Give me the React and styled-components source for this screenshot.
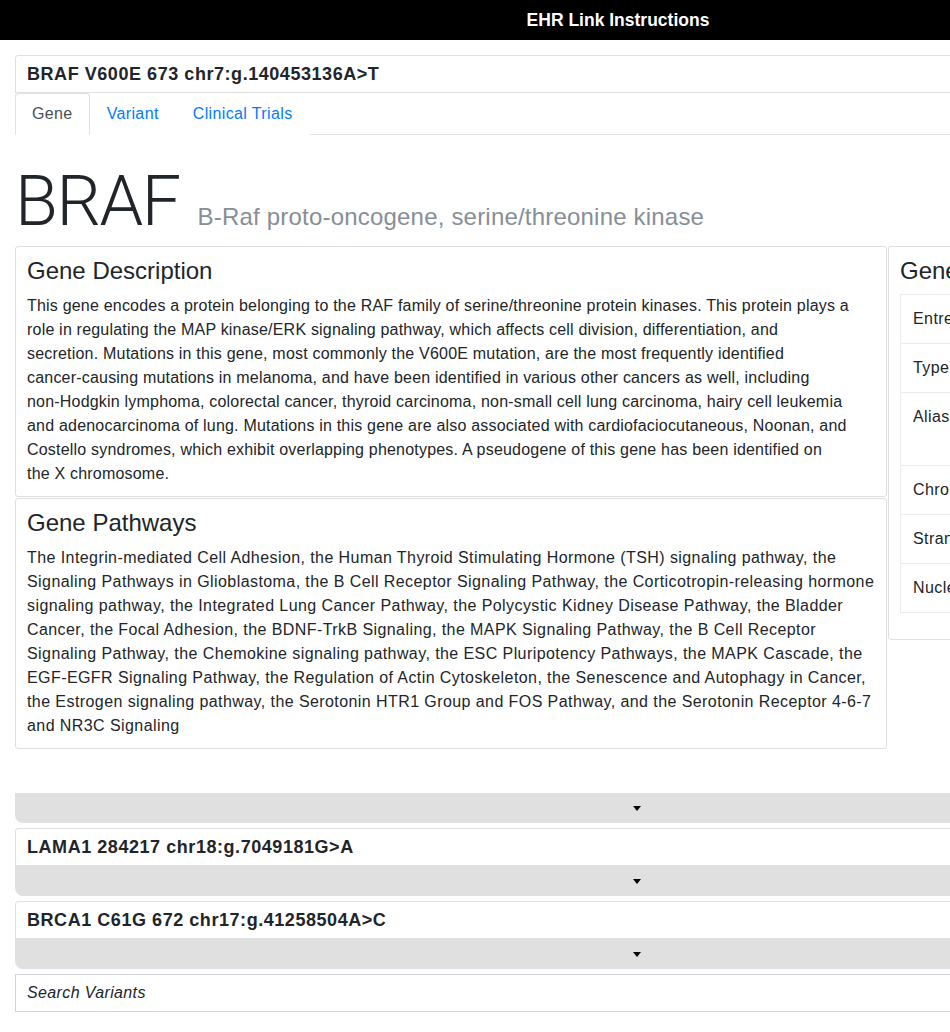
import styled, { createGlobalStyle } from "styled-components";

const Global = createGlobalStyle`
    body{
        margin:0;
        font-family: "Liberation Sans", Arial, sans-serif;
        font-size:16px;
        line-height:1.5;
        letter-spacing:0.42px;
        color:#212529;
        background:#fff;
    }
    *{ box-sizing:border-box; }
`;

const Page = styled.div`
    width:1274px;
`;

const TopBar = styled.div`
    height:40px;
    background:#000;
    color:#fff;
    display:flex;
    align-items:center;
    justify-content:center;
    padding-right:38px;
    font-size:17.5px;
    font-weight:bold;
    letter-spacing:0;
`;

const Main = styled.div`
    padding:15px 15px 0 15px;
`;

const Block = styled.div`
    margin-bottom:5px;
`;

const Card = styled.div`
    border:1px solid rgba(0,0,0,.125);
    border-radius:3px 3px 0 0;
`;

const CardHeader = styled.div`
    padding:6px 11px;
    font-size:18px;
    font-weight:bold;
    line-height:24px;
    letter-spacing:0.55px;
`;

const Tabs = styled.div`
    display:flex;
    border-bottom:1px solid #dee2e6;
`;

const Tab = styled.div`
    padding:8px 16px;
    line-height:24px;
    margin-bottom:-1px;
    letter-spacing:0.37px;
    border:1px solid ${p => p.active ? "#dee2e6" : "transparent"};
    border-bottom-color:${p => p.active ? "#fff" : "transparent"};
    border-radius:4px 4px 0 0;
    background:#fff;
    color:${p => p.active ? "#495057" : "#007bff"};
`;

const Content = styled.div`
    padding-bottom:44px;
`;

const Title = styled.h1`
    margin:23px 0 2px 0;
    font-family: Roboto, "Liberation Sans", sans-serif;
    font-size:70px;
    font-weight:300;
    line-height:86px;
    letter-spacing:-1.5px;
`;

const Subtitle = styled.small`
    font-family: "Liberation Sans", Arial, sans-serif;
    font-size:24px;
    font-weight:400;
    line-height:1;
    color:#868e96;
    letter-spacing:0.2px;
    margin-left:18px;
`;

const Row = styled.div`
    display:flex;
    align-items:flex-start;
    gap:1px;
`;

const LeftCol = styled.div`
    width:872px;
    flex:none;
`;

const RightCol = styled.div`
    flex:1;
`;

const Panel = styled.div`
    border:1px solid rgba(0,0,0,.125);
    border-radius:3px;
    padding:10px 11px;
    & + &{ margin-top:1px; }
`;

const PanelTitle = styled.h4`
    margin:0 0 8px 0;
    font-size:24px;
    font-weight:500;
    line-height:1.2;
    letter-spacing:0;
`;

const Text = styled.p`
    margin:0;
    letter-spacing:${p => p.tight ? "0.2px" : "inherit"};
`;

const Table = styled.table`
    width:100%;
    border-collapse:collapse;
    margin-bottom:16px;
    td{
        border:1px solid #e9ecef;
        padding:12px;
        line-height:24px;
        vertical-align:top;
    }
    td:first-child{ width:150px; }
`;

const Toggle = styled.div`
    height:30px;
    background:#e0e0e0;
    border-radius:0 0 8px 8px;
    display:flex;
    align-items:center;
    justify-content:center;
`;

const Caret = styled.span`
    width:0;
    height:0;
    border-left:4px solid transparent;
    border-right:4px solid transparent;
    border-top:5px solid #000;
    margin-top:2px;
`;

const Search = styled.input`
    display:block;
    width:100%;
    margin-top:5px;
    height:38px;
    padding:6px 11px;
    font:inherit;
    line-height:24px;
    letter-spacing:0.37px;
    border:1px solid #ced4da;
    outline:none;
    &::placeholder{
        color:#212529;
        font-style:italic;
    }
`;

// line breaks follow the original layout
const descriptionLines = [
    "This gene encodes a protein belonging to the RAF family of serine/threonine protein kinases. This protein plays a",
    "role in regulating the MAP kinase/ERK signaling pathway, which affects cell division, differentiation, and",
    "secretion. Mutations in this gene, most commonly the V600E mutation, are the most frequently identified",
    "cancer-causing mutations in melanoma, and have been identified in various other cancers as well, including",
    "non-Hodgkin lymphoma, colorectal cancer, thyroid carcinoma, non-small cell lung carcinoma, hairy cell leukemia",
    "and adenocarcinoma of lung. Mutations in this gene are also associated with cardiofaciocutaneous, Noonan, and",
    "Costello syndromes, which exhibit overlapping phenotypes. A pseudogene of this gene has been identified on",
    "the X chromosome.",
];

const pathways = "The Integrin-mediated Cell Adhesion, the Human Thyroid Stimulating Hormone (TSH) signaling pathway, the Signaling Pathways in Glioblastoma, the B Cell Receptor Signaling Pathway, the Corticotropin-releasing hormone signaling pathway, the Integrated Lung Cancer Pathway, the Polycystic Kidney Disease Pathway, the Bladder Cancer, the Focal Adhesion, the BDNF-TrkB Signaling, the MAPK Signaling Pathway, the B Cell Receptor Signaling Pathway, the Chemokine signaling pathway, the ESC Pluripotency Pathways, the MAPK Cascade, the EGF-EGFR Signaling Pathway, the Regulation of Actin Cytoskeleton, the Senescence and Autophagy in Cancer, the Estrogen signaling pathway, the Serotonin HTR1 Group and FOS Pathway, and the Serotonin Receptor 4-6-7 and NR3C Signaling";

const info = [
    ["Entrez ID", "673"],
    ["Type", "protein-coding"],
    ["Aliases", "BRAF1, BRAF-1, NS7, RAFB1"],
    ["Chromosome", "7"],
    ["Strand", "-"],
    ["Nucleotides", "190713"],
];

const others = [
    "LAMA1 284217 chr18:g.7049181G>A",
    "BRCA1 C61G 672 chr17:g.41258504A>C",
];

export default function App(){
    return(
        <Page>
            <Global/>
            <TopBar>EHR Link Instructions</TopBar>
            <Main>
                <Block>
                    <Card>
                        <CardHeader>BRAF V600E 673 chr7:g.140453136A&gt;T</CardHeader>
                    </Card>
                    <Tabs>
                        <Tab active>Gene</Tab>
                        <Tab>Variant</Tab>
                        <Tab>Clinical Trials</Tab>
                    </Tabs>
                    <Content>
                        <Title>BRAF<Subtitle>B-Raf proto-oncogene, serine/threonine kinase</Subtitle></Title>
                        <Row>
                            <LeftCol>
                                <Panel>
                                    <PanelTitle>Gene Description</PanelTitle>
                                    <Text tight>
                                        {descriptionLines.map((l, i) => (
                                            <span key={i}>{l}{i < descriptionLines.length - 1 && <br/>}</span>
                                        ))}
                                    </Text>
                                </Panel>
                                <Panel>
                                    <PanelTitle>Gene Pathways</PanelTitle>
                                    <Text>{pathways}</Text>
                                </Panel>
                            </LeftCol>
                            <RightCol>
                                <Panel>
                                    <PanelTitle>Gene Info</PanelTitle>
                                    <Table>
                                        <tbody>
                                            {info.map(([k, v]) => (
                                                <tr key={k}><td>{k}</td><td>{v}</td></tr>
                                            ))}
                                        </tbody>
                                    </Table>
                                </Panel>
                            </RightCol>
                        </Row>
                    </Content>
                    <Toggle><Caret/></Toggle>
                </Block>
                {others.map(o => (
                    <Block key={o}>
                        <Card>
                            <CardHeader>{o}</CardHeader>
                        </Card>
                        <Toggle><Caret/></Toggle>
                    </Block>
                ))}
                <Search placeholder="Search Variants"/>
            </Main>
        </Page>
    );
}
